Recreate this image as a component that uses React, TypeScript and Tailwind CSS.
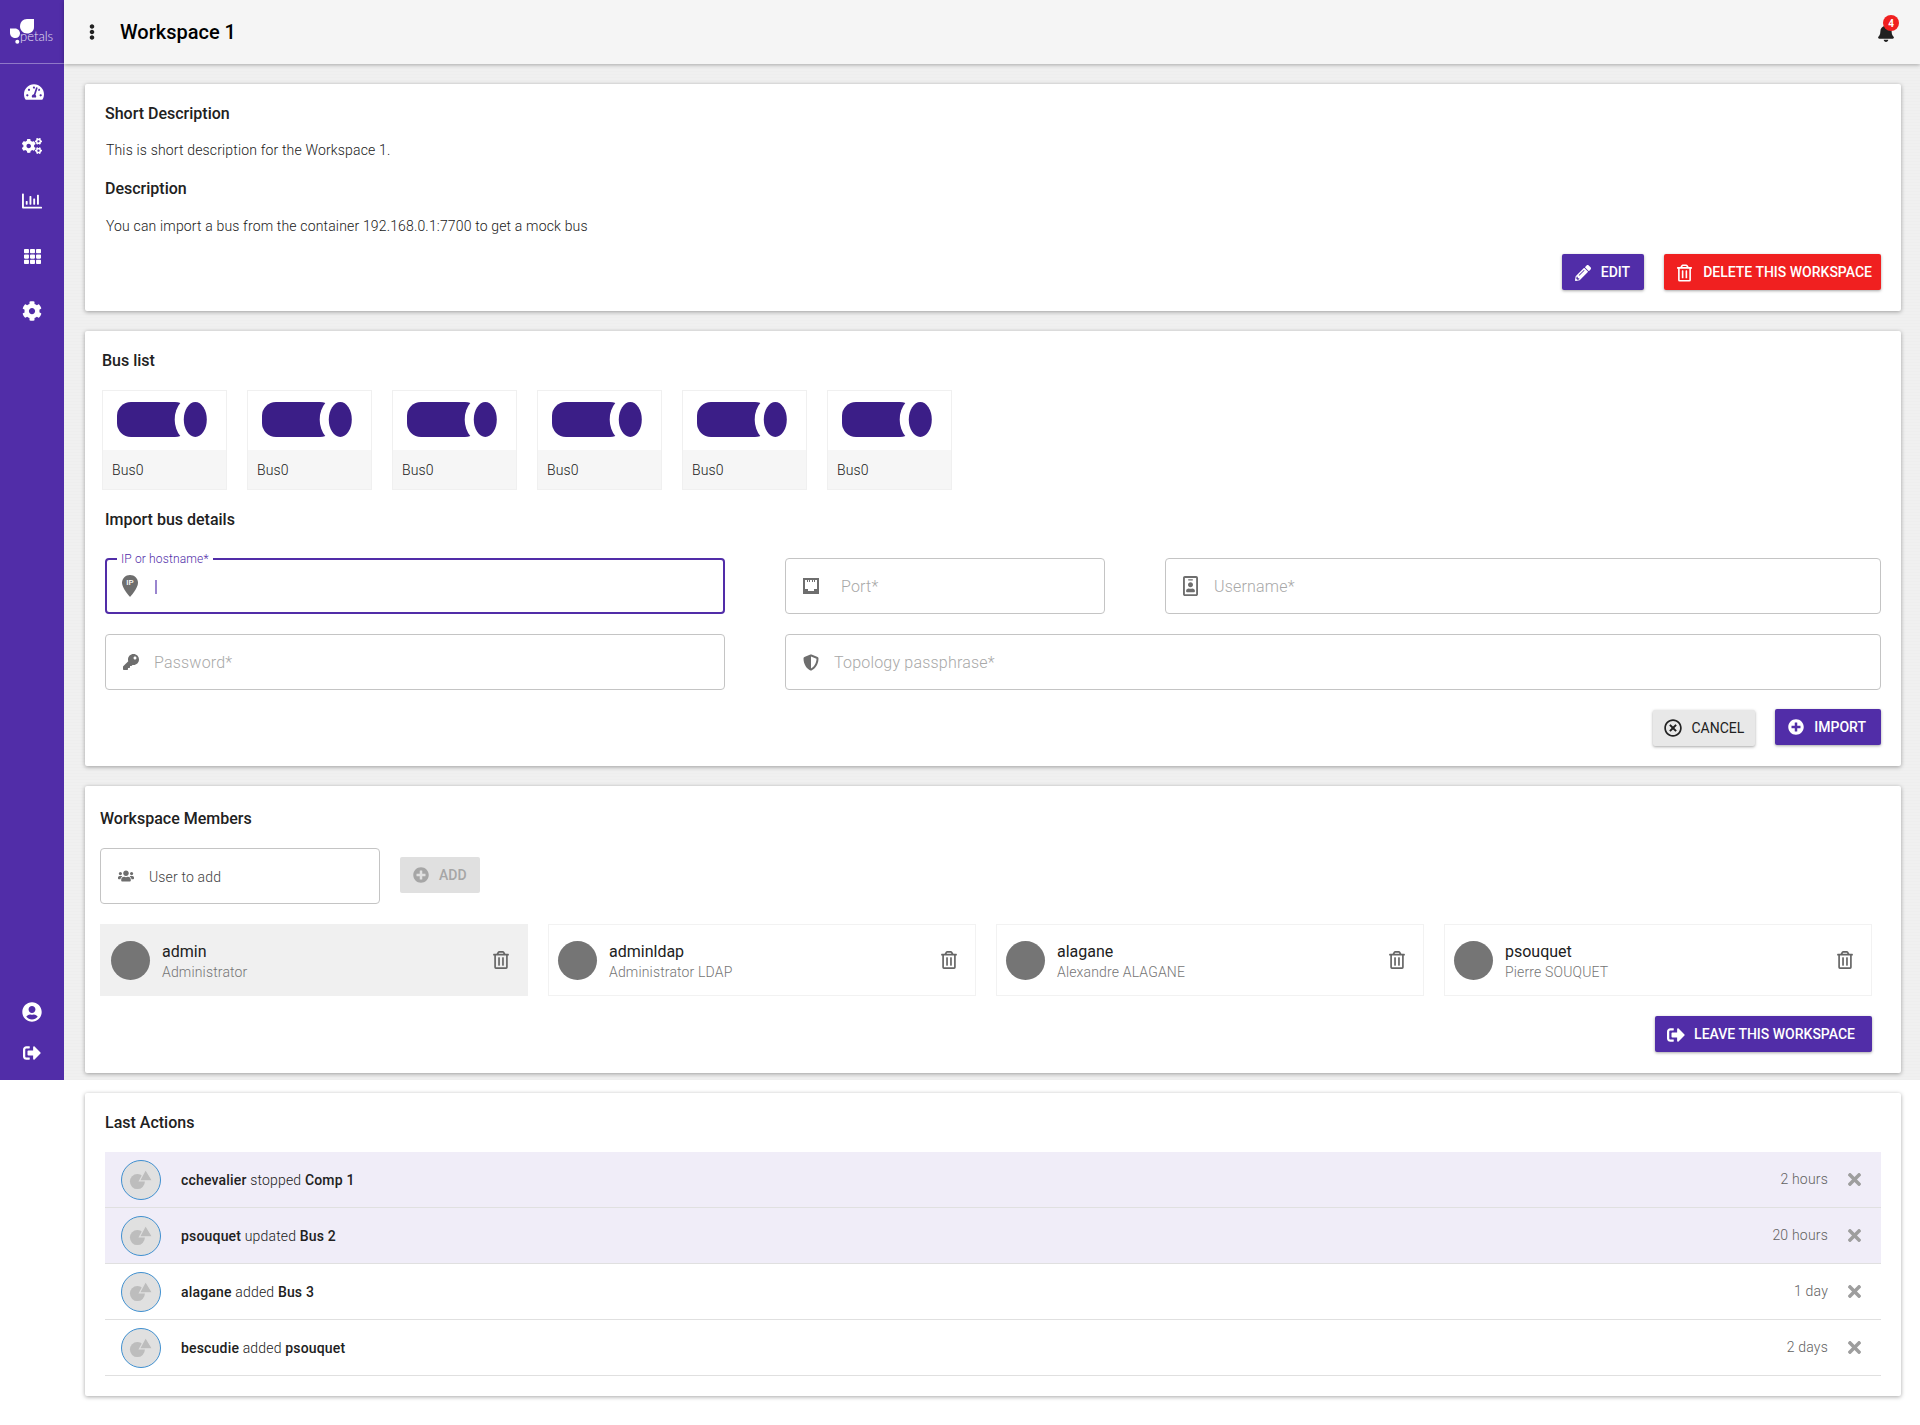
import type { ReactNode } from 'react';
import {
  FaBell,
  FaCog,
  FaCogs,
  FaEllipsisV,
  FaKey,
  FaPencilAlt,
  FaPlusCircle,
  FaRegChartBar,
  FaRegIdBadge,
  FaRegTimesCircle,
  FaRegTrashAlt,
  FaShieldAlt,
  FaSignOutAlt,
  FaTachometerAlt,
  FaTh,
  FaTimes,
  FaUserCircle,
  FaUsers,
} from 'react-icons/fa';

function PetalsLogo() {
  return (
    <div className="relative h-[64px] w-full border-b border-[#8f78c8]">
      <svg viewBox="0 0 64 64" className="h-[64px] w-[64px]">
        <path d="M34 19 L34 27 C34 31 31 33.500 27 33.500 C23 33.500 20 30 20 26.500 C20 22 23 19 27 19 Z" fill="#fff" />
        <path d="M10 28.500 L15 28.500 C18 28.500 20 31 20 33.500 C20 36 18 38 15.500 38 C12.500 38 10 36 10 33 Z" fill="#fff" />
        <circle cx="17.300" cy="41.700" r="2" fill="#fff" />
      </svg>
      <span className="absolute left-[20px] top-[28px] font-['Lato',sans-serif] text-[13px] leading-[16px] font-light text-[#e6e0f4]">
        petals
      </span>
    </div>
  );
}

function Sidebar() {
  return (
    <aside className="flex h-[1080px] w-[64px] shrink-0 flex-col items-center bg-[#512da8] pb-[18px] text-white">
      <PetalsLogo />
      <div className="mt-[18px] flex flex-col items-center">
        <FaTachometerAlt className="ml-[4px] mb-[34px] h-[20px] w-[20px]" />
        <FaCogs className="mb-[35px] h-[20px] w-[20px]" />
        <FaRegChartBar className="mb-[35px] h-[20px] w-[20px]" />
        <span className="mb-[35px] flex h-[20px] w-[20px] items-center justify-center">
          <FaTh className="h-[17px] w-[17px]" />
        </span>
        <FaCog className="h-[20px] w-[20px]" />
      </div>
      <div className="mt-auto flex flex-col items-center gap-[22px]">
        <FaUserCircle className="h-[20px] w-[20px]" />
        <FaSignOutAlt className="h-[18px] w-[18px]" />
      </div>
    </aside>
  );
}

function Topbar() {
  return (
    <header className="relative flex h-[64px] items-center bg-[#f5f5f5] pl-[20px] pr-[25px] shadow-[0_1px_4px_rgba(0,0,0,0.3)]">
      <FaEllipsisV className="h-[16px] w-[16px] text-[#212121]" />
      <h1 className="ml-[20px] text-[20px] font-medium text-black">Workspace 1</h1>
      <div className="relative ml-auto mt-[2px]">
        <FaBell className="h-[18px] w-[18px] text-[#212121]" />
        <span className="absolute -right-[4px] -top-[9px] flex h-[16px] w-[16px] items-center justify-center rounded-full bg-[#f02020] text-[10px] font-bold text-white">
          4
        </span>
      </div>
    </header>
  );
}

function Card({ className, children }: { className: string; children: ReactNode }) {
  return (
    <section className={`rounded-[2px] bg-white shadow-[0_1px_4px_rgba(0,0,0,0.35)] ${className}`}>{children}</section>
  );
}

function Btn({ icon, label, className }: { icon: ReactNode; label: string; className: string }) {
  return (
    <button className={`flex h-[36px] items-center rounded-[2px] text-[14px] font-medium uppercase shadow-[0_1px_3px_rgba(0,0,0,0.35)] ${className}`}>
      {icon}
      {label}
    </button>
  );
}

function Field({ icon, placeholder, className = '', inputClass = 'ml-[15px]' }: { icon: ReactNode; placeholder: string; className?: string; inputClass?: string }) {
  return (
    <div className={`flex h-[56px] items-center rounded-[4px] border border-[#c4c4c4] pl-[16px] ${className}`}>
      <span className="flex w-[17px] shrink-0 justify-center text-[#6e6e6e]">{icon}</span>
      <input
        placeholder={placeholder}
        className={`${inputClass} mt-[2px] min-w-0 flex-1 bg-transparent text-[16px] font-light tracking-[0.2px] outline-none placeholder:text-[#a8a8a8]`}
      />
    </div>
  );
}

function IpPin() {
  return (
    <svg viewBox="0 0 16 22" className="h-[22px] w-[16px]">
      <path d="M8 0 C3.500 0 0 3.500 0 8 C0 13 8 22 8 22 C8 22 16 13 16 8 C16 3.500 12.500 0 8 0 Z" fill="#6e6e6e" />
      <text x="8" y="10" textAnchor="middle" fontSize="8" fontWeight="500" fill="#fff">
        IP
      </text>
    </svg>
  );
}

function PortIcon() {
  return (
    <svg viewBox="0 0 16 16" className="h-[16px] w-[16px]">
      <path
        fill="#6e6e6e"
        fillRule="evenodd"
        d="M0 0 H16 V16 H0 Z M2 2 V11 H5 V13 H11 V11 H14 V2 H12 V4 H11 V2 H10 V4 H9 V2 H7 V4 H6 V2 H5 V4 H4 V2 Z"
      />
    </svg>
  );
}

function BusCard({ name }: { name: string }) {
  return (
    <div className="w-[125px] border border-[#f0f0f0]">
      <div className="flex h-[59px] items-start pl-[14px] pt-[11px]">
        <svg viewBox="0 0 90 35" className="h-[35px] w-[90px]">
          <rect x="0" y="0" width="72" height="35" rx="14" fill="#3b1e87" />
          <ellipse cx="78" cy="17.500" rx="20.300" ry="24.100" fill="#fff" />
          <ellipse cx="78.300" cy="17.500" rx="11.500" ry="17.500" fill="#3b1e87" />
        </svg>
      </div>
      <div className="flex h-[39px] items-center bg-[#f6f6f6] pl-[9px] pt-[1px] text-[14px] font-light tracking-[0.16px] text-[#212121]">{name}</div>
    </div>
  );
}

function Member({ name, sub, active }: { name: string; sub: string; active?: boolean }) {
  return (
    <div className={`flex h-[72px] w-[428px] items-center border pr-[18px] pt-[4px] ${active ? 'border-[#f0f0f0] bg-[#f0f0f0] pl-[10px]' : 'border-[#f2f2f2] pl-[9px]'}`}>
      <div className="-mt-[4px] h-[39px] w-[39px] rounded-full bg-[#757575]" />
      <div className="ml-[12px]">
        <div className="text-[16px] leading-[20px] text-[#212121]">{name}</div>
        <div className="text-[14px] leading-[20px] font-light tracking-[0.16px] text-[#757575]">{sub}</div>
      </div>
      <FaRegTrashAlt className="ml-auto -mt-[4px] h-[18px] w-[16px] text-[#666]" />
    </div>
  );
}

function ActionAvatar() {
  return (
    <svg viewBox="0 0 40 40" className="h-[40px] w-[40px] shrink-0">
      <circle cx="20" cy="20" r="19.500" fill="#e0e0e0" stroke="#3f8fcf" />
      <circle cx="16.400" cy="21.600" r="7.500" fill="#bdbdbd" />
      <polygon points="24.600,9.500 18.500,20.800 31.500,20.800" fill="#bdbdbd" stroke="#e0e0e0" strokeWidth="1.200" />
    </svg>
  );
}

function ActionRow({ who, verb, what, time, unread }: { who: string; verb: string; what: string; time: string; unread?: boolean }) {
  return (
    <div className={`flex h-[56px] items-center border-b border-[#e0e0e0] pl-[16px] pr-[17px] ${unread ? 'bg-[#f0edf8]' : ''}`}>
      <ActionAvatar />
      <div className="ml-[20px] mt-[2px] text-[14px] font-light tracking-[0.18px] text-[#212121]">
        <span className="font-medium">{who}</span> {verb} <span className="font-medium">{what}</span>
      </div>
      <span className="ml-auto text-[14px] font-light tracking-[0.2px] text-[#616161]">{time}</span>
      <FaTimes className="ml-[17px] h-[19px] w-[19px] text-[#9e9e9e]" />
    </div>
  );
}

export default function App() {
  return (
    <div className="flex min-h-screen w-full bg-white font-['Roboto',sans-serif] text-[#212121]">
      <Sidebar />
      <main className="min-w-0 flex-1 bg-[repeating-linear-gradient(0deg,#eeeeee_0px,#eeeeee_1px,#f0f0f0_1px,#f0f0f0_3px),repeating-linear-gradient(90deg,#ececec_0px,#ececec_1px,#f0f0f0_1px,#f0f0f0_3px)] bg-[length:100%_1080px] bg-no-repeat pb-[29px]">
        <Topbar />
        <div className="flex flex-col gap-[20px] pl-[21px] pr-[19px] pt-[20px]">
          <Card className="px-[20px] pb-[21px] pt-[20px]">
            <h2 className="text-[16px] leading-[20px] font-medium">Short Description</h2>
            <p className="ml-[1px] mt-[16px] text-[14px] leading-[20px] font-light tracking-[0.16px]">This is short description for the Workspace 1.</p>
            <h2 className="mt-[19px] text-[16px] leading-[20px] font-medium">Description</h2>
            <p className="ml-[1px] mt-[17px] text-[14px] leading-[20px] font-light tracking-[0.16px]">You can import a bus from the container 192.168.0.1:7700 to get a mock bus</p>
            <div className="mt-[18px] flex justify-end gap-[20px]">
              <Btn
                className="bg-[#512da8] pl-[13px] pr-[14px] pt-[1px] text-white"
                icon={<FaPencilAlt className="mr-[10px] h-[16px] w-[16px]" />}
                label="Edit"
              />
              <Btn
                className="bg-[#f02020] pl-[13px] pr-[9px] pt-[1px] text-white"
                icon={<FaRegTrashAlt className="mr-[11px] h-[18px] w-[15px]" />}
                label="Delete this workspace"
              />
            </div>
          </Card>

          <Card className="pb-[20px] pl-[17px] pr-[20px] pt-[20px]">
            <h2 className="text-[16px] leading-[20px] font-medium">Bus list</h2>
            <div className="mt-[19px] flex gap-[20px]">
              {[0, 1, 2, 3, 4, 5].map((i) => (
                <BusCard key={i} name="Bus0" />
              ))}
            </div>
            <div className="ml-[3px]">
              <h2 className="mt-[20px] text-[16px] leading-[20px] font-medium">Import bus details</h2>
              <div className="mt-[28px] flex gap-[60px]">
                <div className="relative flex h-[56px] w-[620px] items-center rounded-[4px] border-2 border-[#512da8] pl-[15px]">
                  <span className="absolute -top-[8px] left-[10px] bg-white px-[4px] text-[12px] leading-[14px] font-light tracking-[0.15px] text-[#512da8]">IP or hostname*</span>
                  <IpPin />
                  <span className="ml-[17px] mt-[2px] h-[14px] w-[2px] bg-[#9a85cf]" />
                </div>
                <Field className="w-[320px]" inputClass="ml-[22px]" icon={<PortIcon />} placeholder="Port*" />
                <Field className="flex-1" icon={<FaRegIdBadge className="h-[20px] w-[15px]" />} placeholder="Username*" />
              </div>
              <div className="mt-[20px] flex gap-[60px]">
                <Field className="w-[620px]" icon={<FaKey className="h-[16px] w-[16px]" />} placeholder="Password*" />
                <Field className="flex-1" icon={<FaShieldAlt className="h-[17px] w-[16px]" />} placeholder="Topology passphrase*" />
              </div>
              <div className="mt-[19px] flex items-start justify-end gap-[20px]">
                <Btn
                  className="mt-[1px] bg-[#e8e8e8] pl-[11px] pr-[11px] font-normal text-[#212121]"
                  icon={<FaRegTimesCircle className="mr-[9px] h-[18px] w-[18px]" />}
                  label="Cancel"
                />
                <Btn
                  className="bg-[#512da8] pl-[13px] pr-[15px] text-white"
                  icon={<FaPlusCircle className="mr-[10px] h-[16px] w-[16px]" />}
                  label="Import"
                />
              </div>
            </div>
          </Card>

          <Card className="pb-[21px] pl-[15px] pr-[29px] pt-[23px]">
            <h2 className="text-[16px] leading-[20px] font-medium">Workspace Members</h2>
            <div className="mt-[19px] flex items-center gap-[20px]">
              <div className="flex h-[56px] w-[280px] items-center rounded-[4px] border border-[#c4c4c4] pl-[17px]">
                <FaUsers className="h-[16px] w-[16px] text-[#6e6e6e]" />
                <span className="ml-[15px] mt-[2px] text-[14px] font-light tracking-[0.16px] text-[#424242]">User to add</span>
              </div>
              <div className="-mt-[2px] flex h-[36px] items-center rounded-[2px] bg-[#e0e0e0] pl-[13px] pr-[13px] text-[14px] font-medium text-[#a6a6a6]">
                <FaPlusCircle className="mr-[10px] h-[16px] w-[16px]" />
                ADD
              </div>
            </div>
            <div className="mt-[20px] flex gap-[20px]">
              <Member name="admin" sub="Administrator" active />
              <Member name="adminldap" sub="Administrator LDAP" />
              <Member name="alagane" sub="Alexandre ALAGANE" />
              <Member name="psouquet" sub="Pierre SOUQUET" />
            </div>
            <div className="mt-[20px] flex justify-end">
              <Btn
                className="bg-[#512da8] pl-[12px] pr-[17px] pt-[1px] text-white"
                icon={<FaSignOutAlt className="mr-[9px] h-[18px] w-[18px]" />}
                label="Leave this workspace"
              />
            </div>
          </Card>

          <Card className="pb-[20px] pl-[20px] pr-[20px] pt-[20px]">
            <h2 className="text-[16px] leading-[20px] font-medium">Last Actions</h2>
            <div className="mt-[19px]">
              <ActionRow who="cchevalier" verb="stopped" what="Comp 1" time="2 hours" unread />
              <ActionRow who="psouquet" verb="updated" what="Bus 2" time="20 hours" unread />
              <ActionRow who="alagane" verb="added" what="Bus 3" time="1 day" />
              <ActionRow who="bescudie" verb="added" what="psouquet" time="2 days" />
            </div>
          </Card>
        </div>
      </main>
    </div>
  );
}
